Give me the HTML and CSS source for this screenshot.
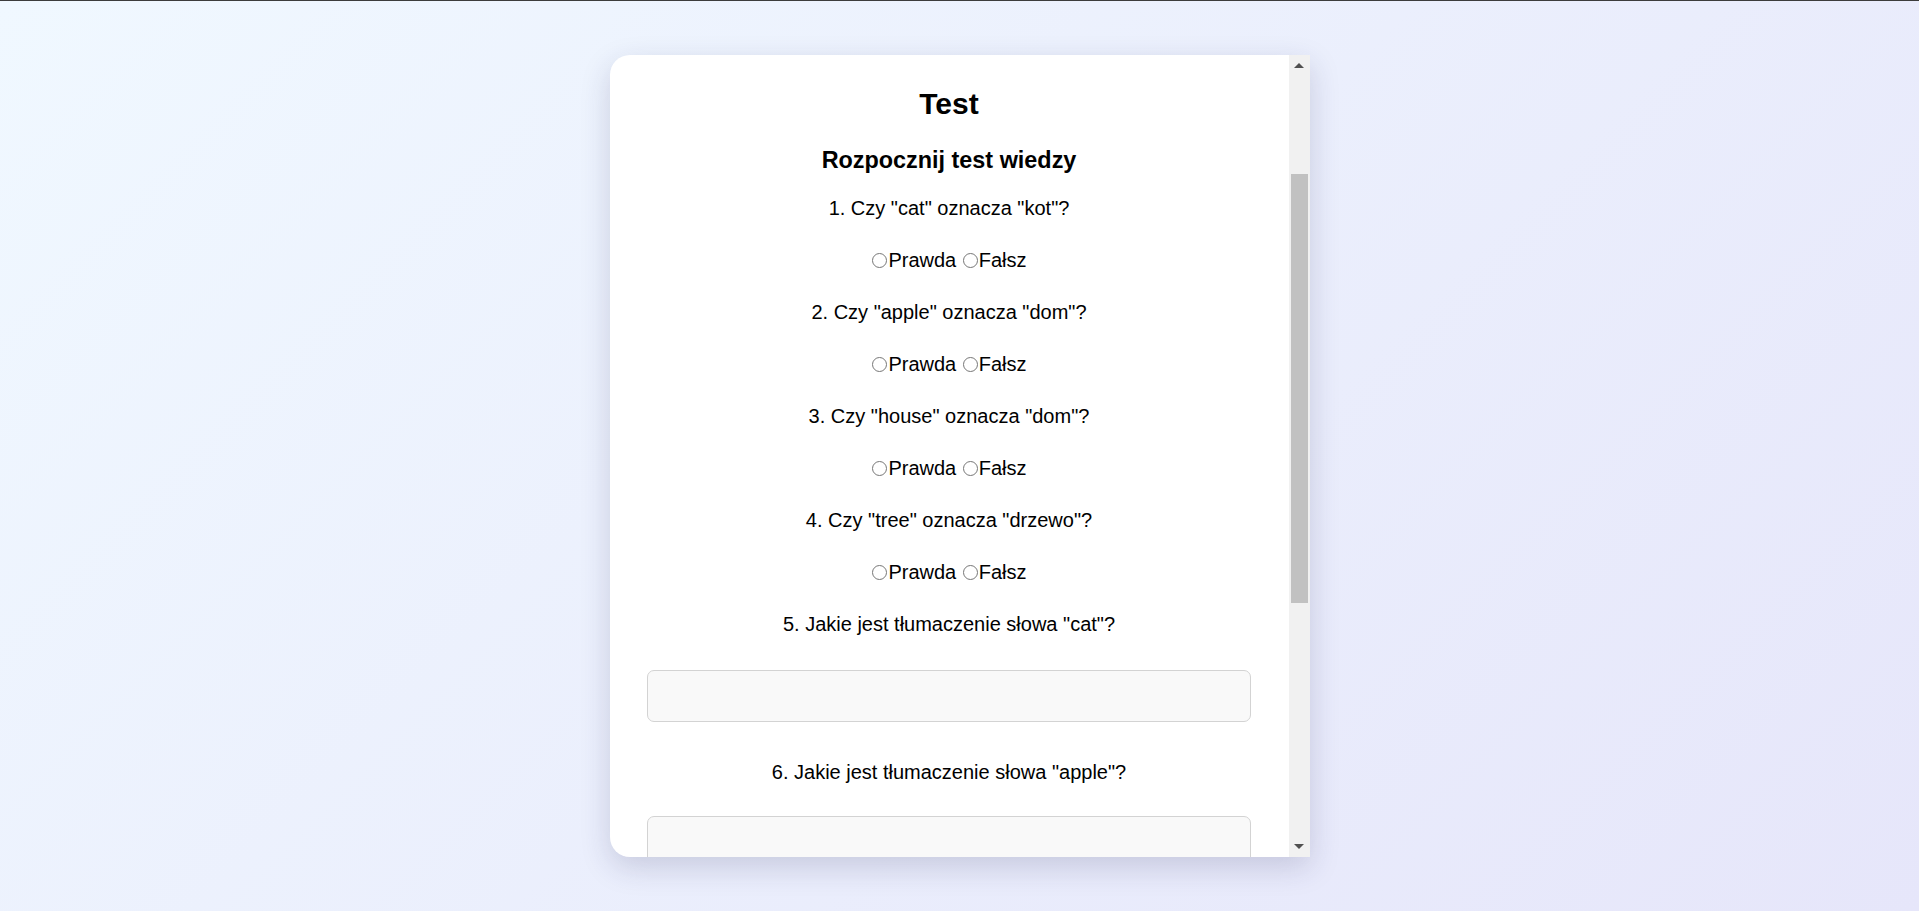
FILE: index.html
```html
<!DOCTYPE html>
<html lang="pl">
<head>
<meta charset="utf-8">
<title>Test</title>
<link rel="stylesheet" href="styles.css">
</head>
<body>
<main class="card">
  <div class="content">
    <h1 class="title">Test</h1>
    <h3 class="subtitle">Rozpocznij test wiedzy</h3>
    <form class="quiz">
      <p class="row">1. Czy "cat" oznacza "kot"?</p>
      <div class="row"><label><input type="radio" name="q1">Prawda</label> <label><input type="radio" name="q1">Fałsz</label></div>
      <p class="row">2. Czy "apple" oznacza "dom"?</p>
      <div class="row"><label><input type="radio" name="q2">Prawda</label> <label><input type="radio" name="q2">Fałsz</label></div>
      <p class="row">3. Czy "house" oznacza "dom"?</p>
      <div class="row"><label><input type="radio" name="q3">Prawda</label> <label><input type="radio" name="q3">Fałsz</label></div>
      <p class="row">4. Czy "tree" oznacza "drzewo"?</p>
      <div class="row"><label><input type="radio" name="q4">Prawda</label> <label><input type="radio" name="q4">Fałsz</label></div>
      <p class="row">5. Jakie jest tłumaczenie słowa "cat"?</p>
      <input class="answer first" type="text">
      <p class="row">6. Jakie jest tłumaczenie słowa "apple"?</p>
      <input class="answer second" type="text">
    </form>
  </div>
  <div class="scrollbar" aria-hidden="true">
    <div class="sb-btn"><span class="tri up"></span></div>
    <div class="sb-track"><div class="sb-thumb"></div></div>
    <div class="sb-btn"><span class="tri down"></span></div>
  </div>
</main>
</body>
</html>
```
FILE: styles.css
```css
* { box-sizing: border-box; }

html, body { height: 100%; }

body {
  margin: 0;
  border-top: 1px solid #3c3c3c;
  display: flex;
  align-items: center;
  justify-content: center;
  background: linear-gradient(135deg, #f0f8ff 0%, #e6e6fa 100%);
  font-family: "Liberation Sans", Arial, sans-serif;
  color: #000;
}

.card {
  width: 700px;
  height: 802px;
  display: flex;
  background: #fff;
  border-radius: 20px 0 0 20px;
  box-shadow: 0 10px 30px rgba(40, 40, 90, 0.18);
}

.content {
  flex: 1;
  overflow: hidden;
  border-radius: 20px 0 0 20px;
  padding: 31px 37.5px 0;
  text-align: center;
}

.title {
  margin: 0;
  font-size: 30px;
  line-height: 36px;
  font-weight: bold;
}

.subtitle {
  margin: 24px 0 8px;
  font-size: 23.4px;
  line-height: 28px;
  font-weight: bold;
}

.quiz { margin: 0; }

.row {
  margin: 0;
  padding: 14px 0;
  font-size: 20px;
  line-height: 24px;
}

.row label { white-space: nowrap; }

.row input[type="radio"] {
  width: 15px;
  height: 15px;
  margin: 0 1px 0 1px;
  vertical-align: -1px;
}

.answer {
  display: block;
  width: 100%;
  height: 52px;
  border: 1px solid #d3d3d3;
  border-radius: 7px;
  background: #f9f9f9;
  font-size: 20px;
  font-family: inherit;
}

.answer.first { margin: 20px 0 24px; }
.answer.second { margin: 18px 0 0; }

.scrollbar {
  width: 21px;
  display: flex;
  flex-direction: column;
  background: #f1f1f1;
}

.sb-btn {
  height: 21px;
  display: flex;
  align-items: center;
  justify-content: center;
}

.sb-track {
  flex: 1;
  padding: 98px 2px 0 2px;
}

.sb-thumb {
  height: 429px;
  background: #c1c1c1;
}

.tri {
  width: 0;
  height: 0;
  border-left: 5px solid transparent;
  border-right: 5px solid transparent;
}

.tri.up { border-bottom: 5px solid #505050; }
.tri.down { border-top: 5px solid #505050; }
```
